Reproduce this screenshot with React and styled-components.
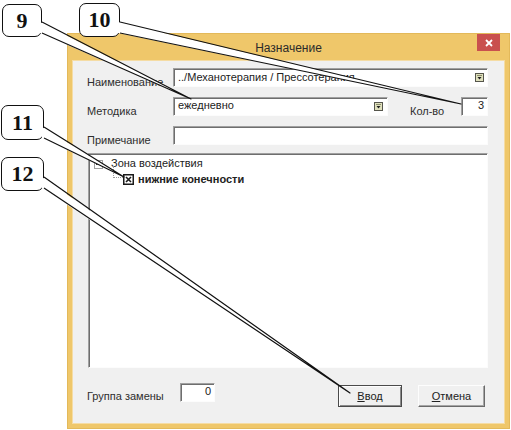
import React from "react";
import styled, { createGlobalStyle } from "styled-components";

const GlobalStyle = createGlobalStyle`
  html, body { margin: 0; padding: 0; background: #fff; }
  body { font-family: "Liberation Sans", Arial, sans-serif; }
`;

const Page = styled.div`
  position: relative;
  width: 511px;
  height: 430px;
  overflow: hidden;
  box-sizing: border-box;
  padding: 33px 0 0 67px;
`;

const Dialog = styled.div`
  width: 443px;
  height: 396px;
  box-sizing: border-box;
  background: #efc76a;
  border: 1px solid #e3b95a;
  padding: 0 5px 5px;
  display: flex;
  flex-direction: column;
`;

const TitleBar = styled.div`
  height: 27px;
  flex: none;
  display: grid;
  grid-template-columns: 1fr auto 1fr;
  align-items: start;
`;

const Title = styled.div`
  grid-column: 2;
  padding-top: 6px;
  font-size: 12px;
  line-height: 16px;
  color: #2a2a2a;
`;

const CloseButton = styled.div`
  grid-column: 3;
  justify-self: end;
  margin-right: 4px;
  width: 23px;
  height: 17px;
  background: #c9504e;
  display: flex;
  align-items: center;
  justify-content: center;
`;

const Client = styled.div`
  flex: 1;
  background: #f0f0f0;
  box-shadow: 0 0 0 1px #f5dca4;
  padding: 7px 16px 0 14px;
  display: flex;
  flex-direction: column;
`;

const FieldRow = styled.div`
  display: flex;
  height: 19px;
  & + & {
    margin-top: 10px;
  }
`;

const Label = styled.span`
  flex: none;
  width: ${(p) => (p.$w ? `${p.$w}px` : "auto")};
  margin-left: ${(p) => p.$ml || 0}px;
  margin-top: ${(p) => (p.$mt === undefined ? 8 : p.$mt)}px;
  font-size: 11px;
  line-height: 13px;
  color: #2e2e2e;
  white-space: nowrap;
`;

const Field = styled.div`
  box-sizing: border-box;
  height: 19px;
  flex: ${(p) => (p.$w ? "none" : "1")};
  width: ${(p) => (p.$w ? `${p.$w}px` : "auto")};
  margin-left: ${(p) => (p.$auto ? "auto" : "0")};
  background: #fff;
  border: 1px solid;
  border-color: #a0a0a0 #fcfcfc #fcfcfc #a0a0a0;
  box-shadow: inset 1px 1px 0 #6e6e6e;
  display: flex;
  align-items: center;
  justify-content: ${(p) => (p.$right ? "flex-end" : "space-between")};
  padding: 0 ${(p) => p.$pr || 3}px 1px 4px;
  font-size: 11px;
  line-height: 13px;
  color: #222;
  white-space: nowrap;
  overflow: hidden;
`;

const FieldText = styled.span`
  margin-top: ${(p) => p.$mt || 0}px;
`;

const DropIcon = () => (
  <svg width="9" height="9" viewBox="0 0 9 9">
    <rect x="0.5" y="0.5" width="8" height="8" fill="#dfe0bd" stroke="#55554c" />
    <rect x="2" y="2" width="5" height="1" fill="#8a8c6a" />
    <path d="M2.5 4h4L4.5 6.5z" fill="#1e1e1e" />
  </svg>
);

const TreePanel = styled.div`
  box-sizing: border-box;
  margin: 8px 0 0 1px;
  height: 215px;
  flex: none;
  background: #fff;
  border: 1px solid;
  border-color: #a0a0a0 #fcfcfc #fcfcfc #a0a0a0;
  box-shadow: inset 1px 1px 0 #6e6e6e;
  padding: 2px 0 0 5px;
  display: flex;
  flex-direction: column;
`;

const TreeRow = styled.div`
  display: flex;
  align-items: center;
  height: ${(p) => p.$h}px;
  padding-left: ${(p) => p.$indent || 0}px;
`;

const Expander = styled.span`
  box-sizing: border-box;
  width: 9px;
  height: 9px;
  flex: none;
  border: 1px solid #a0a0a0;
  background: #fff;
  display: flex;
  align-items: center;
  justify-content: center;
  margin-top: 2px;
  &::after {
    content: "";
    width: 5px;
    height: 1px;
    background: #333;
  }
`;

const NodeText = styled.span`
  margin-left: ${(p) => p.$ml}px;
  font-size: 11px;
  line-height: 13px;
  font-weight: ${(p) => (p.$bold ? 700 : 400)};
  color: #222;
  white-space: nowrap;
`;

const Connector = styled.span`
  box-sizing: border-box;
  align-self: flex-start;
  width: 10px;
  height: 12px;
  margin-top: -4px;
  border-left: 1px dotted #9a9a9a;
  border-bottom: 1px dotted #9a9a9a;
  flex: none;
`;

const CheckMark = () => (
  <svg width="11" height="11" viewBox="0 0 11 11" style={{ flex: "none" }}>
    <rect x="0.75" y="0.75" width="9.5" height="9.5" fill="#fff" stroke="#1a1a1a" strokeWidth="1.5" />
    <path d="M3 3l5 5M8 3l-5 5" stroke="#1a1a1a" strokeWidth="1.6" />
  </svg>
);

const BottomRow = styled.div`
  display: flex;
  align-items: flex-start;
  margin-top: 15px;
`;

const ButtonGroup = styled.div`
  display: flex;
  gap: 16px;
  margin: 2px 3px 0 auto;
`;

const Button = styled.button`
  box-sizing: border-box;
  width: ${(p) => p.$w}px;
  height: 22px;
  padding: 0;
  font: 11px "Liberation Sans", Arial, sans-serif;
  color: #222;
  background: #f0f0f0;
  border: 1px solid;
  border-color: ${(p) =>
    p.$default ? "#4a4a4a" : "#fdfdfd #6a6a6a #6a6a6a #fdfdfd"};
  box-shadow: ${(p) =>
    p.$default
      ? "inset 1px 1px 0 #fdfdfd, inset -1px -1px 0 #8a8a8a"
      : "inset -1px -1px 0 #a6a6a6"};
`;

const Callout = styled.div`
  position: absolute;
  left: ${(p) => p.$x}px;
  top: ${(p) => p.$y}px;
  width: ${(p) => p.$w}px;
  height: ${(p) => p.$h}px;
  box-sizing: border-box;
  background: #fff;
  border: 1.5px solid #111;
  border-radius: 7px;
  display: flex;
  align-items: center;
  justify-content: center;
  font: bold 22px "Liberation Serif", "Times New Roman", serif;
  color: #111;
`;

const Leaders = styled.svg`
  position: absolute;
  left: 0;
  top: 0;
  pointer-events: none;
`;

const callouts = [
  { n: "9", x: 2, y: 4, w: 40, h: 33, base: [[40, 22], [40, 33]], tip: [191, 99] },
  { n: "10", x: 79, y: 3, w: 41, h: 34, base: [[118, 22], [118, 33]], tip: [461, 104] },
  { n: "11", x: 1, y: 105, w: 43, h: 35, base: [[42, 127], [42, 138]], tip: [124, 177] },
  { n: "12", x: 1, y: 157, w: 43, h: 34, base: [[42, 177], [42, 188]], tip: [350, 393] },
];

export default function App() {
  return (
    <>
      <GlobalStyle />
      <Page>
        <Dialog>
          <TitleBar>
            <Title>Назначение</Title>
            <CloseButton>
              <svg width="8" height="8" viewBox="0 0 8 8">
                <path d="M1 1l6 6M7 1L1 7" stroke="#fff" strokeWidth="1.8" />
              </svg>
            </CloseButton>
          </TitleBar>
          <Client>
            <FieldRow>
              <Label $w={86}>Наименование</Label>
              <Field>
                <FieldText>../Механотерапия / Прессотерапия</FieldText>
                <DropIcon />
              </Field>
            </FieldRow>
            <FieldRow>
              <Label $w={86}>Методика</Label>
              <Field $w={215} $pr={4}>
                <FieldText $mt={-1}>ежедневно</FieldText>
                <DropIcon />
              </Field>
              <Label $ml={22}>Кол-во</Label>
              <Field $w={27} $auto $right>
                <FieldText $mt={-2}>3</FieldText>
              </Field>
            </FieldRow>
            <FieldRow>
              <Label $w={86}>Примечание</Label>
              <Field />
            </FieldRow>
            <TreePanel>
              <TreeRow $h={14}>
                <Expander />
                <NodeText $ml={8}>Зона воздействия</NodeText>
              </TreeRow>
              <TreeRow $h={19} $indent={19}>
                <Connector />
                <CheckMark />
                <NodeText $ml={4} $bold>нижние конечности</NodeText>
              </TreeRow>
            </TreePanel>
            <BottomRow>
              <Label $w={93} $mt={7}>Группа замены</Label>
              <Field $w={35} $right>
                <FieldText $mt={-2}>0</FieldText>
              </Field>
              <ButtonGroup>
                <Button $w={64} $default>
                  <u>В</u>вод
                </Button>
                <Button $w={67}>
                  <u>О</u>тмена
                </Button>
              </ButtonGroup>
            </BottomRow>
          </Client>
        </Dialog>
        {callouts.map((c) => (
          <Callout key={c.n} $x={c.x} $y={c.y} $w={c.w} $h={c.h}>
            {c.n}
          </Callout>
        ))}
        <Leaders width="511" height="430" viewBox="0 0 511 430">
          {callouts.map((c) => {
            const [a, b] = c.base;
            const t = c.tip;
            return (
              <g key={c.n}>
                <polygon points={`${a[0]},${a[1]} ${t[0]},${t[1]} ${b[0]},${b[1]}`} fill="#fff" />
                <path
                  d={`M${a[0] + 2},${a[1]} L${t[0]},${t[1]} L${b[0] + 2},${b[1]}`}
                  fill="none"
                  stroke="#111"
                  strokeWidth="1.2"
                  strokeLinejoin="round"
                />
              </g>
            );
          })}
        </Leaders>
      </Page>
    </>
  );
}
